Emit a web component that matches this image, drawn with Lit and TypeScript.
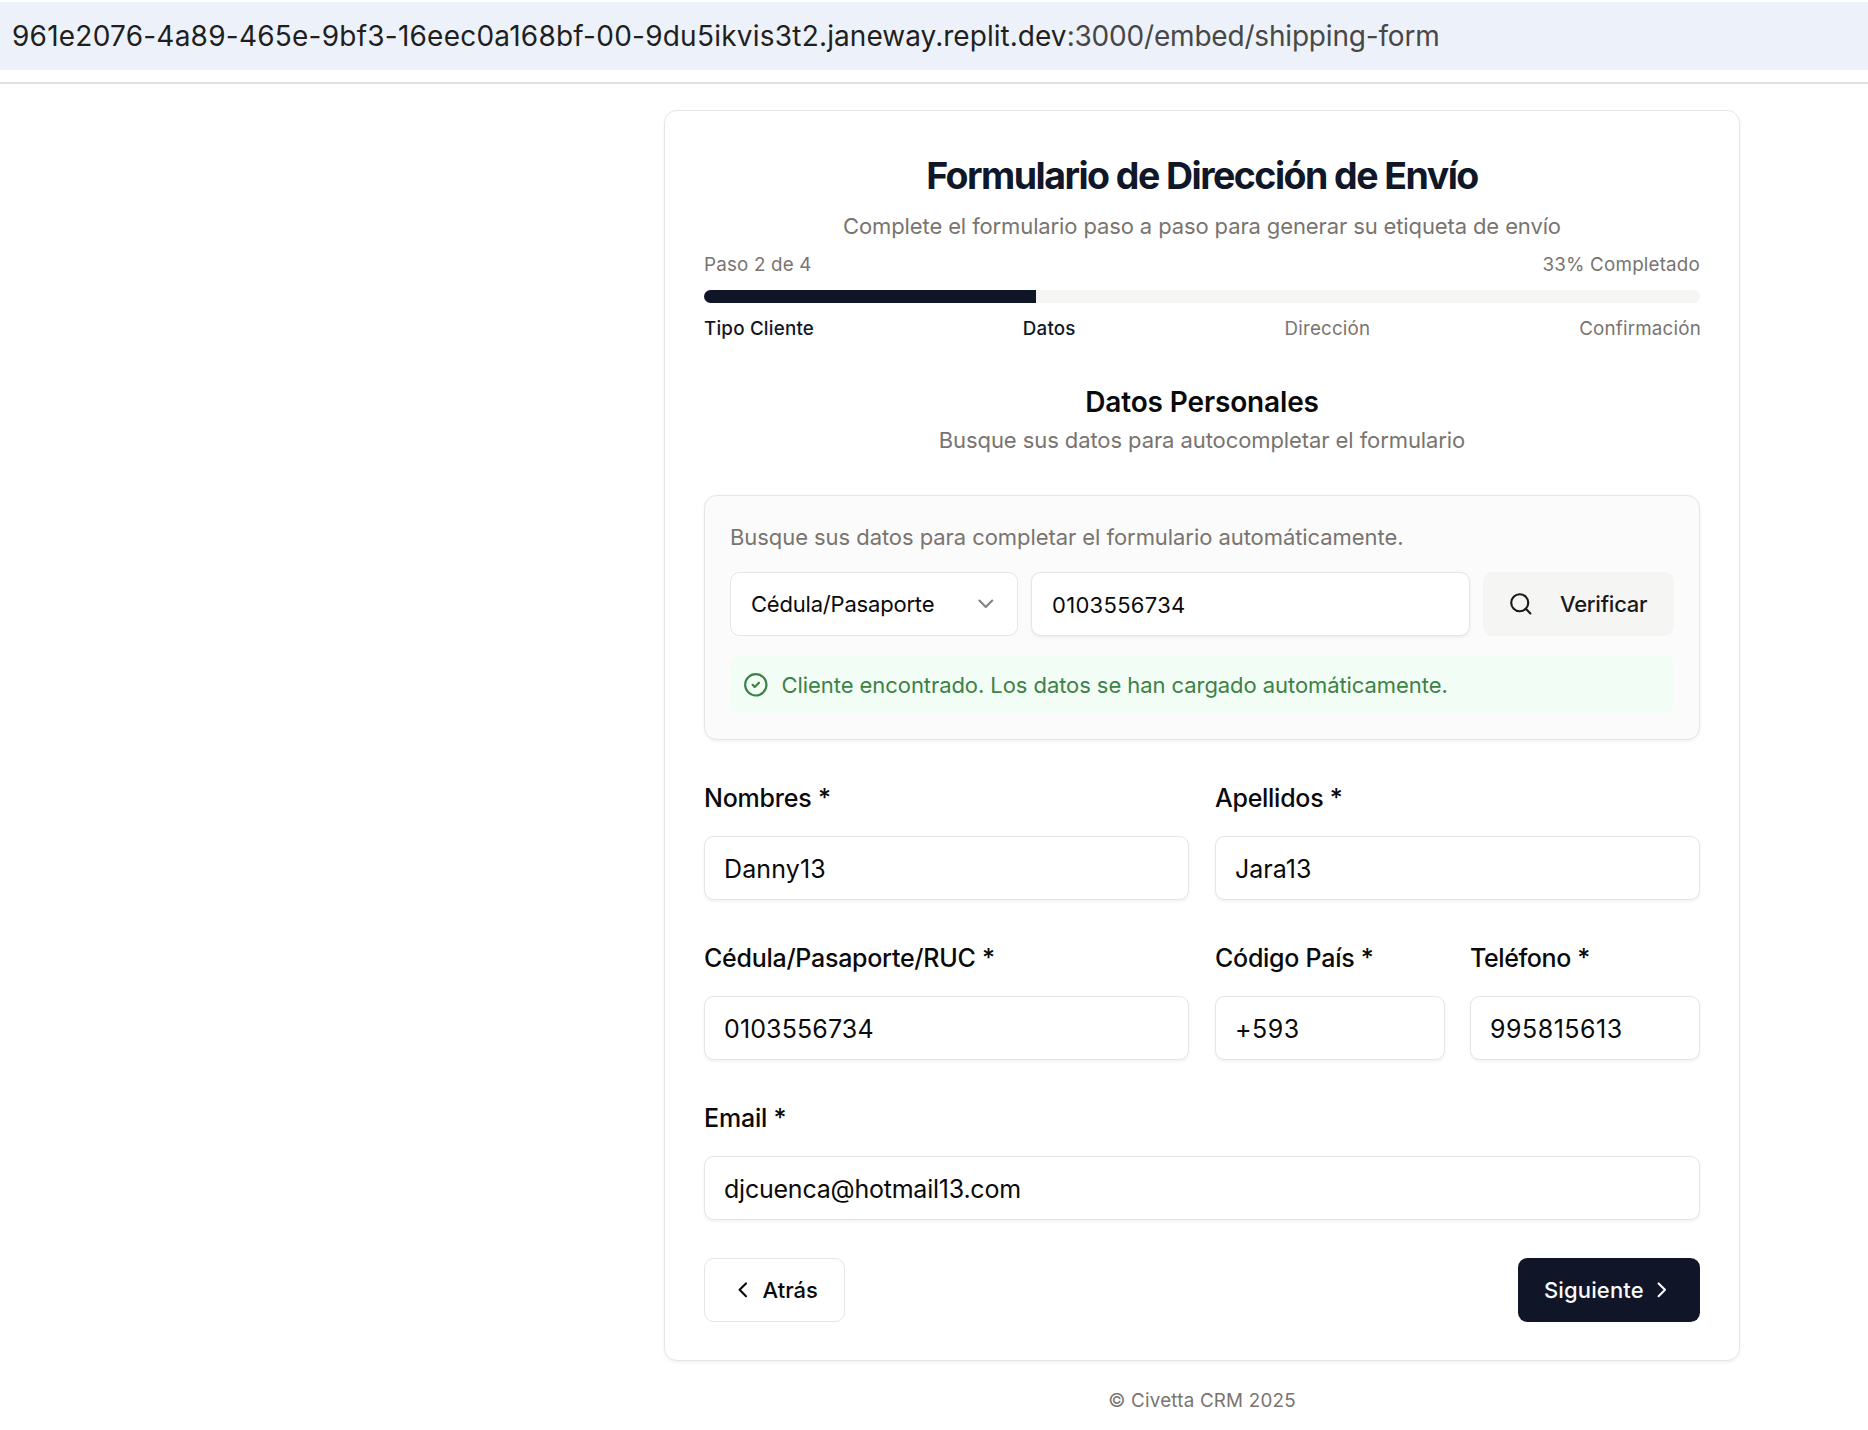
import { LitElement, html, css, svg } from "lit";
import { customElement, property } from "lit/decorators.js";
import { classMap } from "lit/directives/class-map.js";

const ICONS = {
  search: svg`<circle cx="11" cy="11" r="8"></circle><path d="m21 21-4.3-4.3"></path>`,
  check: svg`<circle cx="12" cy="12" r="10"></circle><path d="m9 12 2 2 4-4"></path>`,
  down: svg`<path d="m6 9 6 6 6-6"></path>`,
  left: svg`<path d="m15 18-6-6 6-6"></path>`,
  right: svg`<path d="m9 18 6-6-6-6"></path>`,
};

const icon = (name: keyof typeof ICONS) => html`<svg
  class="icon"
  viewBox="0 0 24 24"
  fill="none"
  stroke="currentColor"
  stroke-width="2"
  stroke-linecap="round"
  stroke-linejoin="round"
>${ICONS[name]}</svg>`;

@customElement("form-field")
class FormField extends LitElement {
  @property() label = "";
  @property() value = "";
  @property() spacing = "";

  static styles = css`
    :host { display: block; min-width: 0; font-family: Inter, "Liberation Sans", sans-serif; }
    label {
      display: block; margin: 0 0 20px; height: 36px; line-height: 36px;
      font-size: 25px; font-weight: 500; letter-spacing: -0.27px; color: #0a0a0a; white-space: nowrap;
    }
    .tight { letter-spacing: -0.4px; }
    .loose { letter-spacing: -0.2px; }
    input {
      display: block; box-sizing: border-box; width: 100%; height: 64px; margin: 0;
      padding: 2px 18px 0 19px; border: 1px solid #e5e5e5; border-radius: 9.6px; outline: none;
      background: #fff; color: #0a0a0a; font: 400 25px Inter, "Liberation Sans", sans-serif;
      box-shadow: 0 1.6px 3.2px rgba(0, 0, 0, 0.05);
    }
    .digits { letter-spacing: 0.13px; }
    .phone { letter-spacing: 0.5px; }
    .mail { letter-spacing: -0.23px; }
  `;

  render() {
    const l = this.label;
    const labelClass = {
      tight: l.startsWith("Tel"),
      loose: l.startsWith("Nom") || l.startsWith("Email"),
    };
    return html`
      <label class=${classMap(labelClass)}>${l}</label>
      <input class=${this.spacing} .value=${this.value} />
    `;
  }
}

@customElement("app-root")
class AppRoot extends LitElement {
  @property({ type: Number }) progress = 33.3;

  static styles = css`
    :host {
      display: block; height: 1430px; overflow: hidden; background: #fff; color: #0a0a0a;
      font-family: Inter, "Liberation Sans", sans-serif;
    }
    .browser { padding: 2px 0 12px; border-bottom: 2px solid #e0e0e0; }
    .url {
      height: 68px; line-height: 68px; padding-left: 12px; background: #edf2fa;
      font-size: 28px; color: #1f1f1f; letter-spacing: 0.23px; white-space: nowrap;
    }
    .domain { letter-spacing: 0.04px; }
    .path { color: #474747; letter-spacing: -0.19px; }
    main { width: 1076px; margin: 26px 0 0 664px; }
    .card {
      box-sizing: border-box; padding: 45px 39px 38px; border: 1px solid #e5e5e5;
      border-radius: 12.8px; box-shadow: 0 1.6px 3.2px rgba(0, 0, 0, 0.05);
    }
    h1, h2, p { margin: 0; text-align: center; white-space: nowrap; }
    h1 {
      height: 40px; line-height: 40px; font-size: 37.5px; font-weight: 700;
      letter-spacing: -1.54px; color: #101729;
    }
    .muted { color: #79746f; }
    p { height: 36px; line-height: 36px; font-size: 22px; }
    .subtitle { margin-top: 12px; letter-spacing: -0.12px; }
    .row { display: flex; justify-content: space-between; }
    .small { height: 28px; line-height: 28px; font-size: 18.8px; letter-spacing: 0.19px; }
    .status { margin: 7px 0 11px; }
    .track { height: 13px; border-radius: 7px; overflow: hidden; background: #f5f5f4; }
    .fill { height: 100%; background: #101628; }
    .steps { margin: 12px -1px 0 0; }
    .done { font-weight: 500; color: #101729; }
    h2 {
      margin-top: 39px; height: 40px; line-height: 40px; font-size: 28px;
      font-weight: 600; letter-spacing: -0.13px;
    }
    .hint { letter-spacing: -0.087px; }
    .lookup {
      margin: 37px 0 40px; padding: 23px 25px 26px; border: 1px solid #e5e5e5;
      border-radius: 12.8px; background: #fbfbfb; box-shadow: 0 1.6px 3.2px rgba(0, 0, 0, 0.05);
    }
    .lead { text-align: left; letter-spacing: -0.063px; }
    .search { display: flex; gap: 13px; margin: 17px 0 20px; height: 64px; }
    .icon { display: block; flex: none; width: 25.6px; height: 25.6px; }
    .select, .query {
      box-sizing: border-box; height: 64px; border: 1px solid #e5e5e5;
      border-radius: 9.6px; background: #fff; font-size: 22px;
    }
    .select {
      display: flex; align-items: center; justify-content: space-between;
      width: 288px; padding: 0 18px 0 20px; letter-spacing: -0.2px;
    }
    .select .icon { opacity: 0.5; }
    .query {
      flex: 1; min-width: 0; padding: 1px 19px 0 20px; outline: none; color: #0a0a0a;
      font-family: Inter, "Liberation Sans", sans-serif; letter-spacing: 0.3px;
      box-shadow: 0 1.6px 3.2px rgba(0, 0, 0, 0.05);
    }
    button {
      display: flex; align-items: center; box-sizing: border-box; height: 64px; margin: 0;
      border: 0; border-radius: 9.6px; white-space: nowrap;
      font: 500 22px Inter, "Liberation Sans", sans-serif; color: #0a0a0a;
    }
    .verify {
      width: 191px; padding: 0 0 0 25.2px; gap: 26.2px; background: #f5f5f4;
      color: #1a1a1a; letter-spacing: -0.24px;
    }
    .alert {
      display: flex; align-items: center; gap: 13px; height: 57px; padding-left: 13px;
      border-radius: 9.6px; background: #f2fdf5; color: #3d8146; font-size: 22px;
      letter-spacing: -0.07px; white-space: nowrap;
    }
    .grid { display: grid; grid-template-columns: 1fr 1fr; gap: 40px 26px; }
    .pair { display: grid; grid-template-columns: 1fr 1fr; gap: 25px; }
    .wide { grid-column: 1 / -1; }
    .actions { margin-top: 38px; }
    .back { width: 141px; padding: 0 0 0 25px; gap: 7px; border: 1px solid #e5e5e5; background: #fff; }
    .next {
      width: 182px; padding: 0 25px 0 26px; justify-content: space-between;
      background: #101628; color: #fafafa; letter-spacing: 0.14px;
    }
    .footer { margin-top: 25px; height: 30px; line-height: 30px; font-size: 18.8px; letter-spacing: 0.21px; }
  `;

  private steps = ["Tipo Cliente", "Datos", "Dirección", "Confirmación"];

  render() {
    return html`
      <div class="browser">
        <div class="url">961e2076-4a89-465e-9bf3-16eec0a168bf-00-9du5ikvis3t2.<span class="domain">janeway.replit.dev</span><span class="path">:3000/embed/shipping-form</span></div>
      </div>
      <main>
        <section class="card">
          <h1>Formulario de Dirección de Envío</h1>
          <p class="subtitle muted">Complete el formulario paso a paso para generar su etiqueta de envío</p>
          <div class="row small status muted"><span>Paso 2 de 4</span><span>33% Completado</span></div>
          <div class="track"><div class="fill" style="width:${this.progress}%"></div></div>
          <div class="row small steps">
            ${this.steps.map((s, i) => html`<span class=${i < 2 ? "done" : "muted"}>${s}</span>`)}
          </div>
          <h2>Datos Personales</h2>
          <p class="hint muted">Busque sus datos para autocompletar el formulario</p>
          <div class="lookup">
            <p class="lead muted">Busque sus datos para completar el formulario automáticamente.</p>
            <div class="search">
              <div class="select"><span>Cédula/Pasaporte</span>${icon("down")}</div>
              <input class="query" .value=${"0103556734"} />
              <button class="verify">${icon("search")}<span>Verificar</span></button>
            </div>
            <div class="alert">${icon("check")}<span>Cliente encontrado. Los datos se han cargado automáticamente.</span></div>
          </div>
          <div class="grid">
            <form-field label="Nombres *" value="Danny13" spacing="digits"></form-field>
            <form-field label="Apellidos *" value="Jara13"></form-field>
            <form-field label="Cédula/Pasaporte/RUC *" value="0103556734" spacing="digits"></form-field>
            <div class="pair">
              <form-field label="Código País *" value="+593" spacing="phone"></form-field>
              <form-field label="Teléfono *" value="995815613" spacing="phone"></form-field>
            </div>
            <form-field class="wide" label="Email *" value="djcuenca@hotmail13.com" spacing="mail"></form-field>
          </div>
          <div class="row actions">
            <button class="back">${icon("left")}<span>Atrás</span></button>
            <button class="next"><span>Siguiente</span>${icon("right")}</button>
          </div>
        </section>
        <p class="footer muted">© Civetta CRM 2025</p>
      </main>
    `;
  }
}
